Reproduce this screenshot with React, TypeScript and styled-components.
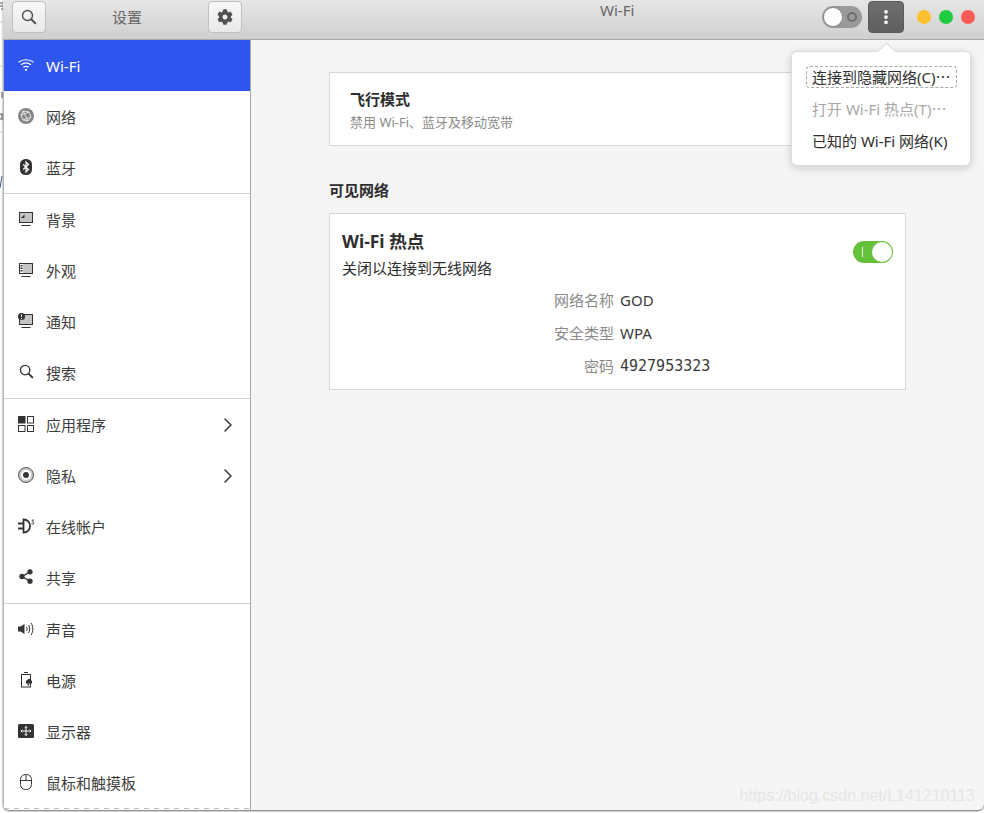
import React from "react";
import styled, { createGlobalStyle } from "styled-components";
import { ChevronRight, EllipsisVertical, Share2 } from "lucide-react";
import { FaCog } from "react-icons/fa";

const Global = createGlobalStyle`
  html, body { margin: 0; padding: 0; background: #fff; }
  body {
    width: 984px;
    height: 813px;
    overflow: hidden;
    font-family: "Noto Sans", "Noto Sans CJK SC", sans-serif;
  }
`;

const Page = styled.div`
  position: relative;
  width: 984px;
  height: 813px;
  padding-left: 3px;
  box-sizing: border-box;
  background: #fff;
`;

const BackdropScraps = styled.svg`
  position: absolute;
  left: 0;
  top: 0;
`;

const Window = styled.div`
  width: 981px;
  height: 810px;
  display: flex;
  flex-direction: column;
  border-radius: 0 0 6px 6px;
  overflow: hidden;
  box-shadow: 0 1px 2px rgba(0, 0, 0, 0.6);
  background: #f5f5f5;
`;

const TitleBar = styled.header`
  height: 39px;
  flex: none;
  display: flex;
  align-items: flex-start;
  background: linear-gradient(#e6e6e6, #cfcfcf);
  border-bottom: 1px solid #a8a8a8;
`;

const TitleLeft = styled.div`
  width: 247px;
  flex: none;
  display: flex;
  justify-content: space-between;
  align-items: center;
  padding: 1px 8px 0 9px;
  box-sizing: border-box;
`;

const ToolButton = styled.button`
  width: 34px;
  height: 32px;
  padding: 0;
  display: flex;
  align-items: center;
  justify-content: center;
  border: 1px solid #c0c0c0;
  border-radius: 4px;
  color: #505050;
  background: linear-gradient(#f8f8f8, #e9e9e9);
`;

const SidebarTitle = styled.span`
  font-size: 15px;
  color: #666;
  margin-top: -1px;
`;

const TitleRight = styled.div`
  flex: 1;
  display: flex;
  align-items: flex-start;
  justify-content: flex-end;
  position: relative;
  padding: 1px 9px 0 0;
  min-width: 0;
`;

const WindowTitle = styled.span`
  position: absolute;
  left: 350px;
  top: 0;
  font-size: 15px;
  color: #666;
`;

const HeaderSwitch = styled.div`
  width: 40px;
  height: 22px;
  margin: 5px 6px 0 0;
  border-radius: 11px;
  background: #9a9a9a;
  position: relative;
`;

const HeaderKnob = styled.span`
  position: absolute;
  left: 1px;
  top: 1px;
  width: 18px;
  height: 18px;
  border-radius: 50%;
  background: #fff;
  border: 1px solid #8a8a8a;
`;

const HeaderRing = styled.span`
  position: absolute;
  right: 5px;
  top: 6px;
  width: 6px;
  height: 6px;
  border-radius: 50%;
  border: 2px solid #6f6f6f;
`;

const MenuButton = styled.button`
  width: 36px;
  height: 32px;
  padding: 0;
  margin-right: 13px;
  display: flex;
  align-items: center;
  justify-content: center;
  border: 1px solid #5a5a5a;
  border-radius: 4px;
  color: #fff;
  background: linear-gradient(#6e6e6e, #5f5f5f);
`;

const Lights = styled.div`
  display: flex;
  gap: 8px;
  margin-top: 9px;
`;

const Light = styled.span<{ $color: string }>`
  width: 14px;
  height: 14px;
  border-radius: 50%;
  background: ${(p) => p.$color};
`;

const Body = styled.div`
  flex: 1;
  display: flex;
  min-height: 0;
`;

const Sidebar = styled.nav`
  width: 248px;
  flex: none;
  box-sizing: border-box;
  background: #fff;
  border-left: 1px solid #b4b4b4;
  border-right: 1px solid #a9a9a9;
  overflow: hidden;
`;

const Row = styled.div<{ $active?: boolean }>`
  height: 51px;
  display: flex;
  align-items: center;
  padding: 0 10px 0 14px;
  gap: 12px;
  font-size: 15px;
  color: ${(p) => (p.$active ? "#fff" : "#3d3d3d")};
  background: ${(p) => (p.$active ? "#2f55ef" : "transparent")};
`;

const IconSlot = styled.span`
  width: 16px;
  height: 16px;
  flex: none;
  display: flex;
  align-items: center;
  justify-content: center;
  margin-top: -2px;
`;

const RowLabel = styled.span`
  flex: 1;
`;

const Separator = styled.div`
  border-top: 1px solid #d2d2d2;
`;

const DashedEdge = styled.div`
  height: 1px;
  background: repeating-linear-gradient(90deg, #bcbcbc 0 5px, transparent 5px 10px);
`;

const Content = styled.main`
  flex: 1;
  position: relative;
  padding: 32px 0 0 78px;
  box-sizing: border-box;
`;

const Card = styled.section`
  width: 577px;
  box-sizing: border-box;
  background: #fff;
  border: 1px solid #d7d7d7;
`;

const AirplaneCard = styled(Card)`
  height: 74px;
  padding: 16px 20px 0;
`;

const CardTitle = styled.div`
  font-size: 15px;
  font-weight: 700;
  line-height: 20px;
  color: #2e2e2e;
`;

const CardHint = styled.div`
  font-size: 13px;
  line-height: 18px;
  margin-top: 4px;
  color: #8a8a8a;
`;

const SectionTitle = styled.h2`
  margin: 34px 0 13px;
  font-size: 15px;
  font-weight: 700;
  line-height: 20px;
  color: #2e2e2e;
`;

const HotspotCard = styled(Card)`
  height: 177px;
  padding: 16px 12px 0;
  position: relative;
`;

const HotspotTitle = styled.div`
  font-size: 17.5px;
  font-weight: 700;
  line-height: 22px;
  color: #2e2e2e;
`;

const HotspotHint = styled.div`
  font-size: 15px;
  line-height: 20px;
  margin-top: 6px;
  color: #2e2e2e;
`;

const HotspotSwitch = styled.div`
  position: absolute;
  right: 12px;
  top: 27px;
  width: 40px;
  height: 22px;
  border-radius: 11px;
  background: #66c13a;
`;

const HotspotKnob = styled.span`
  position: absolute;
  right: 1px;
  top: 1px;
  width: 20px;
  height: 20px;
  border-radius: 50%;
  background: #fff;
`;

const HotspotMark = styled.span`
  position: absolute;
  left: 9px;
  top: 6px;
  width: 1px;
  height: 10px;
  background: #e4f5da;
`;

const Details = styled.dl`
  margin: 11px 0 0;
  display: grid;
  grid-template-columns: 272px auto;
  column-gap: 6px;
  row-gap: 10px;
  font-size: 15px;
  line-height: 23px;
`;

const DetailKey = styled.dt`
  text-align: right;
  color: #8a8a8a;
`;

const DetailValue = styled.dd<{ $mono?: boolean }>`
  margin: 0;
  color: #3a3a3a;
  font-family: ${(p) =>
    p.$mono ? '"DejaVu Sans Mono", monospace' : "inherit"};
`;

const Popover = styled.div`
  position: absolute;
  right: 13px;
  top: 51px;
  width: 180px;
  height: 115px;
  box-sizing: border-box;
  padding: 14px 14px 0;
  background: #fff;
  border-radius: 6px;
  border: 1px solid #dcdcdc;
  box-shadow: 0 2px 10px rgba(0, 0, 0, 0.18);
  &::before {
    content: "";
    position: absolute;
    top: -7px;
    left: 88px;
    width: 12px;
    height: 12px;
    background: #fff;
    border-left: 1px solid #dcdcdc;
    border-top: 1px solid #dcdcdc;
    transform: rotate(45deg);
  }
`;

const MenuItem = styled.div<{ $focused?: boolean; $disabled?: boolean }>`
  width: 151px;
  height: 22px;
  line-height: 20px;
  margin: 0 0 10px;
  padding-left: 5px;
  font-size: 15px;
  white-space: nowrap;
  box-sizing: border-box;
  color: ${(p) => (p.$disabled ? "#a8a8a8" : "#2e2e2e")};
  border: 1px ${(p) => (p.$focused ? "dashed #a8a8a8" : "solid transparent")};
  border-radius: 4px;
  position: relative;
`;

const Watermark = styled.div`
  position: absolute;
  right: 9px;
  bottom: 8px;
  font: 16px "Liberation Sans", sans-serif;
  color: #e6e6e6;
`;

const GlassIcon = ({ size = 16, color = "#333" }: { size?: number; color?: string }) => (
  <svg width={size} height={size} viewBox="0 0 16 16" fill="none" stroke={color}>
    <circle cx="6.5" cy="6.5" r="5" strokeWidth="1.4" />
    <path d="M10.2 10.2l4.6 4.6" strokeWidth="2" />
  </svg>
);

const WifiIcon = () => (
  <svg width="16" height="16" viewBox="0 0 16 16" fill="none" stroke="#fff" strokeWidth="1.1">
    <path d="M0.5 5.2c4.300-3.300 10.700-3.300 15 0" />
    <path d="M3 7.8c3-2.300 7-2.300 10 0" />
    <path d="M5.3 10.3c1.700-1.200 3.700-1.200 5.400 0" />
    <circle cx="8" cy="12.8" r="1.1" fill="#fff" stroke="none" />
  </svg>
);

const NetworkIcon = () => (
  <svg width="16" height="16" viewBox="0 0 16 16">
    <circle cx="8" cy="8" r="8" fill="#858585" />
    <path d="M5 3l6 1 2 5-3 4-5-1-2-5zM5 3l5 10M11 4L3 7M13 9l-8 3" fill="none" stroke="#e2e2e2" strokeWidth="1" />
  </svg>
);

const BluetoothIcon = () => (
  <svg width="16" height="16" viewBox="0 0 16 16">
    <rect x="2" y="0" width="12" height="16" rx="5.5" fill="#333" />
    <path d="M5.2 5.5l5.300 5L8 13V3l2.500 2.500-5.300 5" fill="none" stroke="#fff" strokeWidth="1.2" />
  </svg>
);

const MonitorIcon = ({ kind }: { kind: "bg" | "look" | "notify" }) => (
  <svg width="16" height="16" viewBox="0 0 16 16">
    <rect x="1.5" y="1.5" width="13" height="10" fill="#c4c4c4" stroke="#333" />
    <path d="M3.5 14.5h9" stroke="#333" />
    {kind === "bg" && <path d="M3 7l3.500-3.500V7z" fill="#333" />}
    {kind === "look" && <path d="M2 2h3v9H2z" fill="#fff" />}
    {kind === "look" && (
      <path d="M2.5 3h2v1.500h-2zM2.500 5.500h2V7h-2zM2.500 8h2v1.500h-2z" fill="#333" />
    )}
    {kind === "notify" && (
      <>
        <circle cx="3.5" cy="3.5" r="3.5" fill="#333" />
        <path d="M3.5 1.500v2.500M3.500 5v1" stroke="#fff" />
      </>
    )}
  </svg>
);

const AppsIcon = () => (
  <svg width="16" height="16" viewBox="0 0 16 16" fill="none" stroke="#333">
    <rect x="0.5" y="0.5" width="6.5" height="6.5" fill="#333" />
    <rect x="9.5" y="0.5" width="6" height="6.5" />
    <rect x="0.5" y="9.5" width="6.5" height="6" />
    <rect x="9.5" y="9.5" width="6" height="6" />
  </svg>
);

const PrivacyIcon = () => (
  <svg width="16" height="16" viewBox="0 0 16 16">
    <circle cx="8" cy="8" r="7.5" fill="#c9c9c9" stroke="#555" />
    <circle cx="8" cy="8" r="5" fill="#fff" />
    <circle cx="8" cy="8" r="3" fill="#333" />
  </svg>
);

const OnlineIcon = () => (
  <svg width="16" height="16" viewBox="0 0 16 16" fill="none" stroke="#333">
    <path d="M5.500 1.500c4 0 6.500 3 6.500 6.500s-2.500 6.500-6.500 6.500z" strokeWidth="1.8" />
    <path d="M0 5.500h5.500M0 10.500h5.500" strokeWidth="1.8" />
    <path d="M16 2.500c-1-1-2-.5-2 .5s2 1 2 2-1.500 1.500-2.500.5" strokeWidth="1" />
  </svg>
);

const SoundIcon = () => (
  <svg width="16" height="16" viewBox="0 0 16 16" fill="none" stroke="#333">
    <path d="M0 5.500h2.500L6.500 3v10l-4-2.500H0z" fill="#333" stroke="none" />
    <path d="M8.500 6c.8 1 .8 3 0 4M10.500 4c1.500 2.300 1.500 5.700 0 8M13 2c2.400 3.500 2.400 8.500 0 12" strokeWidth="1" />
  </svg>
);

const PowerIcon = () => (
  <svg width="16" height="16" viewBox="0 0 16 16" fill="none" stroke="#333">
    <path d="M6 .5h4" />
    <rect x="3.5" y="2.5" width="9" height="12.500" />
    <path d="M8 9l3-2.500L14 9v2.500H8z" fill="#333" stroke="none" />
    <path d="M9.500 11.500H11v2H9.500z" fill="#333" stroke="none" />
  </svg>
);

const DisplayIcon = () => (
  <svg width="16" height="16" viewBox="0 0 16 16">
    <rect x="0" y="1" width="16" height="14" rx="1.5" fill="#333" />
    <path d="M8 3.500v9M3 8h10M6.700 4.800L8 3.500l1.300 1.300M6.700 11.200L8 12.500l1.300-1.300M4.300 6.700L3 8l1.300 1.300M11.700 6.700L13 8l-1.300 1.300" fill="none" stroke="#fff" />
  </svg>
);

const MouseIcon = () => (
  <svg width="16" height="16" viewBox="0 0 16 16" fill="none" stroke="#333">
    <rect x="2.5" y="0.5" width="11" height="15" rx="5" />
    <path d="M2.500 6.500h11M8 .5v6" />
  </svg>
);

type NavItem = { label: string; icon: React.ReactNode; active?: boolean; more?: boolean };

const group1: NavItem[] = [
  { label: "Wi-Fi", icon: <WifiIcon />, active: true },
  { label: "网络", icon: <NetworkIcon /> },
  { label: "蓝牙", icon: <BluetoothIcon /> },
];
const group2: NavItem[] = [
  { label: "背景", icon: <MonitorIcon kind="bg" /> },
  { label: "外观", icon: <MonitorIcon kind="look" /> },
  { label: "通知", icon: <MonitorIcon kind="notify" /> },
  { label: "搜索", icon: <GlassIcon size={15} /> },
];
const group3: NavItem[] = [
  { label: "应用程序", icon: <AppsIcon />, more: true },
  { label: "隐私", icon: <PrivacyIcon />, more: true },
  { label: "在线帐户", icon: <OnlineIcon /> },
  { label: "共享", icon: <Share2 size={17} color="#333" fill="#333" /> },
];
const group4: NavItem[] = [
  { label: "声音", icon: <SoundIcon /> },
  { label: "电源", icon: <PowerIcon /> },
  { label: "显示器", icon: <DisplayIcon /> },
  { label: "鼠标和触摸板", icon: <MouseIcon /> },
];

const NavGroup = ({ items }: { items: NavItem[] }) => (
  <>
    {items.map((item) => (
      <Row key={item.label} $active={item.active}>
        <IconSlot>{item.icon}</IconSlot>
        <RowLabel>{item.label}</RowLabel>
        {item.more && <ChevronRight size={24} color="#3d3d3d" strokeWidth={1.6} />}
      </Row>
    ))}
  </>
);

export default function App() {
  return (
    <Page>
      <Global />
      {/* bits of the window behind, only a sliver shows */}
      <BackdropScraps width="3" height="200" viewBox="0 0 3 200" fill="none" stroke="#555">
        <path d="M0 3h3M0 6h3M1 9h2" />
        <path d="M0 22h3" stroke="#ccc" />
        <path d="M0 66h3" stroke="#ccc" />
        <path d="M2 92v6" />
        <path d="M0 114h3M0 119h3M2 114v5" />
        <path d="M0 132h3" stroke="#ccc" />
        <path d="M0 188l2-12" stroke="#3b5b8a" />
      </BackdropScraps>
      <Window>
        <TitleBar>
          <TitleLeft>
            <ToolButton>
              <GlassIcon color="#505050" />
            </ToolButton>
            <SidebarTitle>设置</SidebarTitle>
            <ToolButton>
              <FaCog size={16} />
            </ToolButton>
          </TitleLeft>
          <TitleRight>
            <WindowTitle>Wi-Fi</WindowTitle>
            <HeaderSwitch>
              <HeaderKnob />
              <HeaderRing />
            </HeaderSwitch>
            <MenuButton>
              <EllipsisVertical size={18} strokeWidth={3} />
            </MenuButton>
            <Lights>
              <Light $color="#fdc02f" />
              <Light $color="#1ecb41" />
              <Light $color="#f95b57" />
            </Lights>
          </TitleRight>
        </TitleBar>
        <Body>
          <Sidebar>
            <NavGroup items={group1} />
            <Separator />
            <NavGroup items={group2} />
            <Separator />
            <NavGroup items={group3} />
            <Separator />
            <NavGroup items={group4} />
            <DashedEdge />
          </Sidebar>
          <Content>
            <AirplaneCard>
              <CardTitle>飞行模式</CardTitle>
              <CardHint>禁用 Wi-Fi、蓝牙及移动宽带</CardHint>
            </AirplaneCard>
            <SectionTitle>可见网络</SectionTitle>
            <HotspotCard>
              <HotspotTitle>Wi-Fi 热点</HotspotTitle>
              <HotspotHint>关闭以连接到无线网络</HotspotHint>
              <HotspotSwitch>
                <HotspotMark />
                <HotspotKnob />
              </HotspotSwitch>
              <Details>
                <DetailKey>网络名称</DetailKey>
                <DetailValue>GOD</DetailValue>
                <DetailKey>安全类型</DetailKey>
                <DetailValue>WPA</DetailValue>
                <DetailKey>密码</DetailKey>
                <DetailValue $mono>4927953323</DetailValue>
              </Details>
            </HotspotCard>
          </Content>
        </Body>
      </Window>
      <Popover>
        <MenuItem $focused>连接到隐藏网络(C)⋯</MenuItem>
        <MenuItem $disabled>打开 Wi-Fi 热点(T)⋯</MenuItem>
        <MenuItem>已知的 Wi-Fi 网络(K)</MenuItem>
      </Popover>
      <Watermark>https://blog.csdn.net/L141210113</Watermark>
    </Page>
  );
}
